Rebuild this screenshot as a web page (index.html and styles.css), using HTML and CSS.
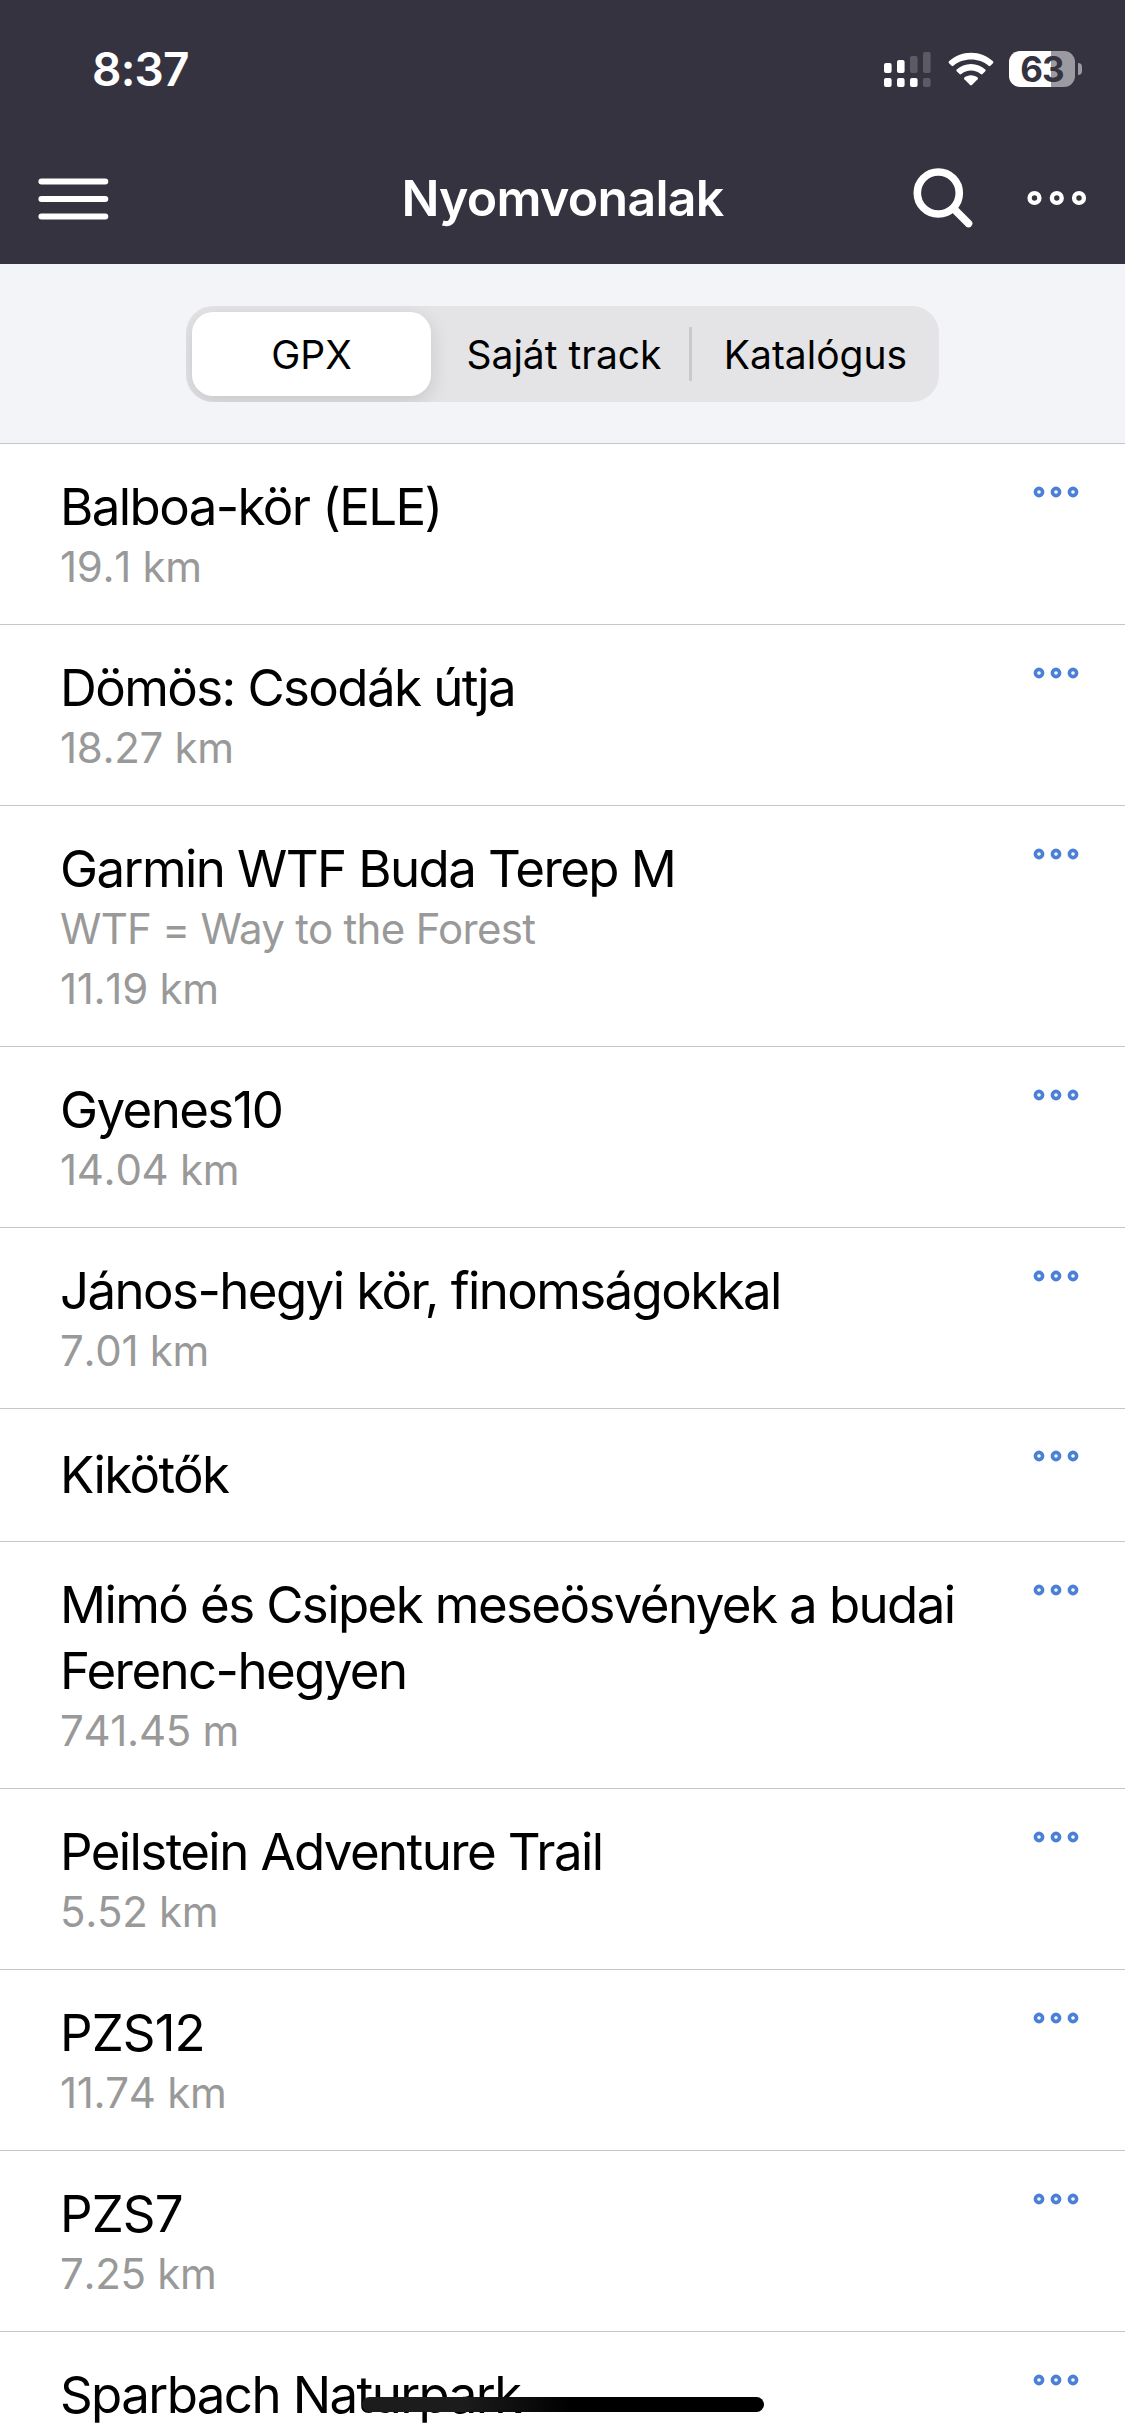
FILE: index.html
```html
<!DOCTYPE html>
<html lang="hu">
<head>
    <meta charset="UTF-8">
    <meta name="viewport" content="width=device-width, initial-scale=1.0">
    <title>Nyomvonalak</title>
    <link rel="stylesheet" href="styles.css">
</head>
<body>
    <svg width="0" height="0" class="defs">
        <symbol id="dots" viewBox="0 0 46 12">
            <g fill="none" stroke="currentColor" stroke-width="3.6">
                <circle cx="6" cy="6" r="3.6"/>
                <circle cx="23" cy="6" r="3.6"/>
                <circle cx="40" cy="6" r="3.6"/>
            </g>
        </symbol>
    </svg>

    <header class="header">
        <div class="status-bar">
            <span class="time">8:37</span>
            <div class="status-icons">
                <svg width="47" height="36" viewBox="0 0 47 36" fill="#fff">
                    <rect x="0" y="12" width="7.6" height="10" rx="2"/>
                    <rect x="13" y="9" width="7.6" height="13" rx="2"/>
                    <rect x="26" y="5" width="7.6" height="17" rx="2" opacity=".2"/>
                    <rect x="39" y="1" width="7.6" height="21" rx="2" opacity=".2"/>
                    <rect x="0" y="27" width="7.6" height="9" rx="2"/>
                    <rect x="13" y="27" width="7.6" height="9" rx="2"/>
                    <rect x="26" y="27" width="7.6" height="9" rx="2"/>
                    <rect x="39" y="27" width="7.6" height="9" rx="2" opacity=".2"/>
                </svg>
                <svg class="wifi" width="46" height="34" viewBox="0 0 46 34" fill="#fff">
                    <path d="M23 0.7C31.5 0.7 39.2 4 45 9.3Q45.9 10.3 45 11.2L42.4 13.8Q41.6 14.6 40.6 13.8C35.9 9.7 29.7 7.5 23 7.5S10.1 9.7 5.4 13.8Q4.4 14.6 3.6 13.8L1 11.2Q0.1 10.3 1 9.3C6.8 4 14.5 0.7 23 0.7Z"/>
                    <path d="M23 12C28.5 12 33.5 14.1 37.3 17.5Q38.2 18.4 37.3 19.3L34.5 22Q33.7 22.8 32.7 22C30.1 19.9 26.7 18.6 23 18.6S15.9 19.9 13.3 22Q12.3 22.8 11.5 22L8.7 19.3Q7.8 18.4 8.7 17.5C12.5 14.1 17.5 12 23 12Z"/>
                    <path d="M23 23.3C25.5 23.3 27.9 24.2 29.6 25.6Q30.5 26.4 29.6 27.3L23.9 33Q23 33.8 22.1 33L16.4 27.3Q15.5 26.4 16.4 25.6C18.1 24.2 20.5 23.3 23 23.3Z"/>
                </svg>
                <div class="battery">63</div>
            </div>
        </div>
        <div class="nav-bar">
            <svg class="menu" width="71" height="42" viewBox="0 0 71 42" stroke="#fff" stroke-width="6" stroke-linecap="round">
                <path d="M3.4 3.5H67.3M3.4 21H67.3M3.4 38.5H67.3"/>
            </svg>
            <h1 class="page-title">Nyomvonalak</h1>
            <div class="nav-actions">
                <svg width="60" height="60" viewBox="0 0 60 60" fill="none" stroke="#fff">
                    <circle cx="25.3" cy="25" r="21" stroke-width="7.6"/>
                    <path d="M40.5 40.5L55.5 55.5" stroke-width="7.6" stroke-linecap="round"/>
                </svg>
                <svg width="60" height="16" viewBox="0 0 60 16" fill="none" stroke="#fff" stroke-width="4.4">
                    <circle cx="7.5" cy="8" r="4.9"/>
                    <circle cx="29.8" cy="8" r="4.9"/>
                    <circle cx="52" cy="8" r="4.9"/>
                </svg>
            </div>
        </div>
    </header>

    <div class="filter">
        <div class="segments">
            <div class="segment active">GPX</div>
            <div class="segment">Saját track</div>
            <div class="segment divided">Katalógus</div>
        </div>
    </div>

    <div class="list">
        <div class="item">
            <div class="info"><h2>Balboa-kör (ELE)</h2><p>19.1 km</p></div>
            <svg class="more"><use href="#dots"/></svg>
        </div>
        <div class="item">
            <div class="info"><h2>Dömös: Csodák útja</h2><p>18.27 km</p></div>
            <svg class="more"><use href="#dots"/></svg>
        </div>
        <div class="item">
            <div class="info"><h2>Garmin WTF Buda Terep M</h2><p><span class="desc">WTF = Way to the Forest</span><br>11.19 km</p></div>
            <svg class="more"><use href="#dots"/></svg>
        </div>
        <div class="item">
            <div class="info"><h2>Gyenes10</h2><p>14.04 km</p></div>
            <svg class="more"><use href="#dots"/></svg>
        </div>
        <div class="item">
            <div class="info"><h2>János-hegyi kör, finomságokkal</h2><p>7.01 km</p></div>
            <svg class="more"><use href="#dots"/></svg>
        </div>
        <div class="item single">
            <div class="info"><h2>Kikötők</h2></div>
            <svg class="more"><use href="#dots"/></svg>
        </div>
        <div class="item">
            <div class="info"><h2>Mimó és Csipek meseösvények a budai<br>Ferenc-hegyen</h2><p>741.45 m</p></div>
            <svg class="more"><use href="#dots"/></svg>
        </div>
        <div class="item">
            <div class="info"><h2>Peilstein Adventure Trail</h2><p>5.52 km</p></div>
            <svg class="more"><use href="#dots"/></svg>
        </div>
        <div class="item">
            <div class="info"><h2 class="code">PZS12</h2><p>11.74 km</p></div>
            <svg class="more"><use href="#dots"/></svg>
        </div>
        <div class="item">
            <div class="info"><h2 class="code">PZS7</h2><p>7.25 km</p></div>
            <svg class="more"><use href="#dots"/></svg>
        </div>
        <div class="item">
            <div class="info"><h2>Sparbach Naturpark</h2></div>
            <svg class="more"><use href="#dots"/></svg>
        </div>
    </div>
    <div class="home-indicator"></div>
</body>
</html>
```

FILE: styles.css
```css
* {
    box-sizing: border-box;
}
body {
    margin: 0;
    height: 2436px;
    overflow: hidden;
    position: relative;
    font-family: Inter, Roboto, sans-serif;
    background: #fff;
    color: #000;
}
h1, h2, p {
    margin: 0;
    font-weight: 400;
}
svg {
    display: block;
    flex-shrink: 0;
}
.defs {
    display: none;
}
.header {
    height: 264px;
    background: #34333f;
    color: #fff;
}
.status-bar {
    height: 138px;
    padding: 0 43px 0 92px;
    display: flex;
    align-items: center;
    justify-content: space-between;
}
.time {
    font-size: 46px;
    font-weight: 600;
    letter-spacing: -0.8px;
}
.status-icons {
    display: flex;
    align-items: center;
}
.wifi {
    margin: 0 15px 0 17px;
}
.battery {
    position: relative;
    width: 66px;
    height: 36px;
    margin-right: 7px;
    border-radius: 11px;
    background: linear-gradient(to right, #fff 42px, #9b9aa0 42px);
    color: #34333f;
    font-size: 35px;
    line-height: 37px;
    font-weight: 700;
    letter-spacing: -1px;
    text-align: center;
}
.battery::after {
    content: "";
    position: absolute;
    left: 69px;
    top: 12px;
    width: 4px;
    height: 12px;
    border-radius: 0 5px 5px 0;
    background: #9b9aa0;
}
.nav-bar {
    height: 120px;
    padding: 0 38px;
    display: grid;
    grid-template-columns: 1fr auto 1fr;
    align-items: center;
}
.menu {
    margin-top: 2px;
}
.page-title {
    font-size: 50px;
    font-weight: 600;
    letter-spacing: -0.7px;
}
.nav-actions {
    display: flex;
    align-items: center;
    justify-content: flex-end;
    gap: 54px;
}
.filter {
    height: 180px;
    padding-top: 42px;
    background: #f3f4f8;
    border-bottom: 1px solid #c6c6c8;
}
.segments {
    width: 753px;
    height: 96px;
    margin: 0 auto;
    padding: 6px;
    display: flex;
    border-radius: 27px;
    background: #e4e4e6;
    overflow: hidden;
}
.segment {
    flex: 0 0 250px;
    display: flex;
    align-items: center;
    justify-content: center;
    font-size: 39px;
    position: relative;
}
.active {
    flex: 0 0 239px;
    margin-right: 8px;
    border-radius: 21px;
    background: #fff;
    box-shadow: 0 6px 20px rgba(0, 0, 0, 0.13);
}
.divided {
    flex: 1;
    padding-left: 9px;
}
.divided::before {
    content: "";
    position: absolute;
    left: 0;
    top: 15px;
    width: 3px;
    height: 54px;
    background: #c9c9cb;
}
.item {
    padding: 30px 46px 27px 60px;
    display: flex;
    justify-content: space-between;
    align-items: flex-start;
    border-bottom: 1px solid #c6c6c8;
}
.item h2 {
    font-size: 51px;
    line-height: 66px;
    letter-spacing: -1.6px;
    white-space: nowrap;
}
.item .code {
    letter-spacing: -0.9px;
}
.item p {
    margin-top: -3px;
    font-size: 42px;
    line-height: 60px;
    letter-spacing: -0.3px;
    font-kerning: none;
    color: #999;
}
.item .desc {
    letter-spacing: -0.7px;
    font-kerning: normal;
}
.single {
    padding: 33px 46px 33px 60px;
}
.more {
    width: 46px;
    height: 12px;
    margin-top: 12px;
    color: #4a80d6;
}
.single .more {
    margin-top: 8px;
}
.home-indicator {
    position: absolute;
    left: 362px;
    top: 2397px;
    width: 402px;
    height: 15px;
    border-radius: 8px;
    background: linear-gradient(to right, #1c1c1c 25%, #000 52%);
}
```
